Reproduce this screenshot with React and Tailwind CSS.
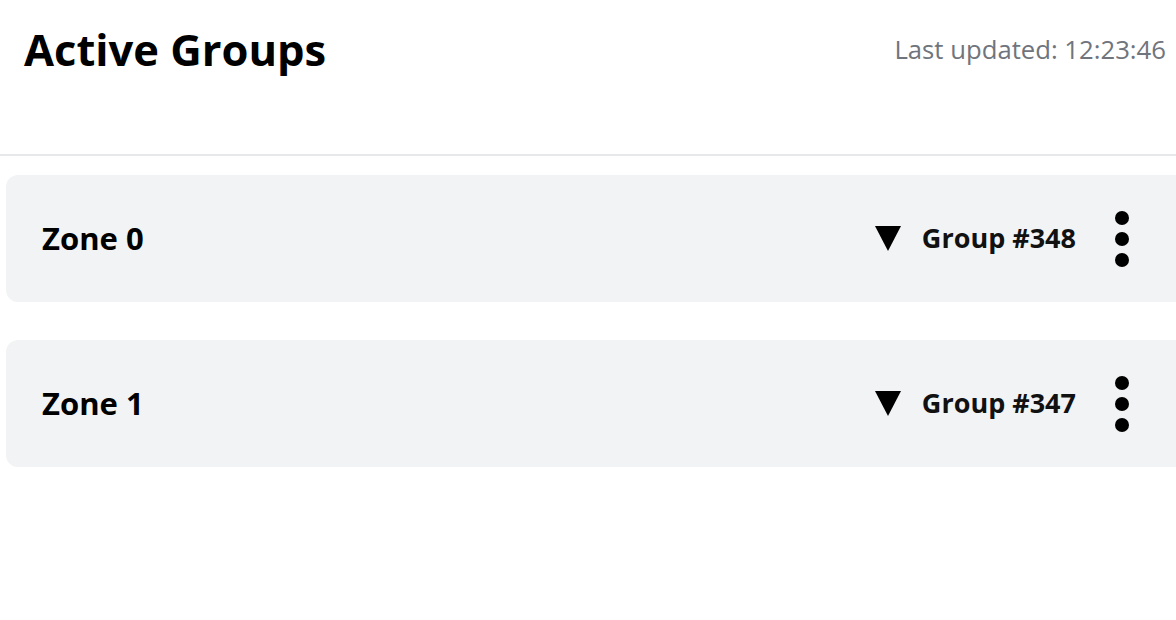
const Triangle = () => (
  <svg width="26" height="25" viewBox="0 0 26 25" className="shrink-0">
    <polygon points="0,0 26,0 13,25" fill="#000" />
  </svg>
);

const Kebab = () => (
  <div className="flex flex-col items-center gap-[7px]">
    <span className="block w-[14px] h-[14px] rounded-full bg-black" />
    <span className="block w-[14px] h-[14px] rounded-full bg-black" />
    <span className="block w-[14px] h-[14px] rounded-full bg-black" />
  </div>
);

const ZoneCard = ({ zone, group }) => (
  <div className="h-[127px] w-[1200px] rounded-xl bg-[#f2f3f5] flex items-center justify-between pl-[36px] pr-[77px]">
    <span className="text-[31px] font-bold text-black">{zone}</span>
    <div className="flex items-center">
      <Triangle />
      <span className="ml-[21px] text-[27px] font-bold text-[#111]">{group}</span>
      <div className="ml-[39px]">
        <Kebab />
      </div>
    </div>
  </div>
);

export default function App() {
  return (
    <div
      className="w-[1176px] h-[620px] overflow-hidden bg-white"
      style={{ fontFamily: '"Open Sans", "Noto Sans", sans-serif' }}
    >
      <div className="h-[156px] flex items-start justify-between pl-6 pr-[10px] pt-[22px] border-b-2 border-[#e7e8ea]">
        <h1 className="text-[43.5px] font-bold leading-[56px] text-black">Active Groups</h1>
        <span className="text-[25.7px] leading-[56px] text-[#70747c]">Last updated: 12:23:46</span>
      </div>
      <div className="flex flex-col gap-[38px] pl-[6px] pt-[19px]">
        <ZoneCard zone="Zone 0" group="Group #348" />
        <ZoneCard zone="Zone 1" group="Group #347" />
      </div>
    </div>
  );
}
